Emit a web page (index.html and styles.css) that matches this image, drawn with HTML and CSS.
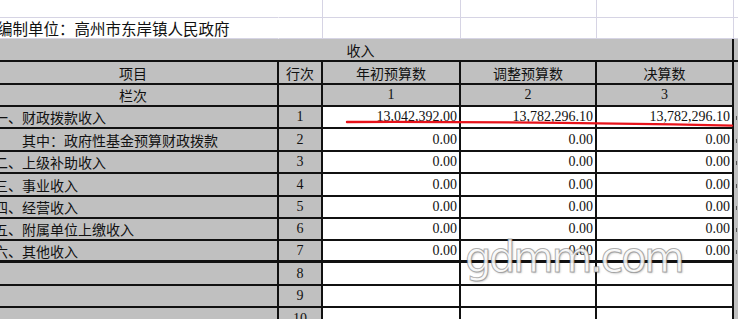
FILE: index.html
```html
<!DOCTYPE html>
<html lang="zh-CN">
<head>
<meta charset="utf-8">
<title>收入决算表</title>
<link rel="stylesheet" href="styles.css">
</head>
<body>
<div class="sheet">
  <div class="grid">
    <div class="c top"></div><div class="c top"></div><div class="c top"></div><div class="c top"></div><div class="c top"></div><div class="c top"></div>
    <div class="c top title">编制单位：高州市东岸镇人民政府</div><div class="c top"></div><div class="c top"></div><div class="c top"></div><div class="c top"></div><div class="c top"></div>

    <div class="c g ctr cjk span5">收入</div><div class="c edge hb"></div>

    <div class="c g ctr cjk">项目</div><div class="c g ctr cjk">行次</div><div class="c g ctr cjk">年初预算数</div><div class="c g ctr cjk">调整预算数</div><div class="c g ctr cjk">决算数</div><div class="c edge"></div>

    <div class="c g ctr cjk">栏次</div><div class="c g ctr"></div><div class="c g ctr ser">1</div><div class="c g ctr ser">2</div><div class="c g ctr ser">3</div><div class="c edge"></div>

    <div class="c g lbl cjk">一、财政拨款收入</div><div class="c g ctr ser">1</div><div class="c w num">13,042,392.00</div><div class="c w num">13,782,296.10</div><div class="c w num">13,782,296.10</div><div class="c edge mk"></div>

    <div class="c g lbl cjk">　　其中：政府性基金预算财政拨款</div><div class="c g ctr ser">2</div><div class="c w num">0.00</div><div class="c w num">0.00</div><div class="c w num">0.00</div><div class="c edge mk"></div>

    <div class="c g lbl cjk">二、上级补助收入</div><div class="c g ctr ser">3</div><div class="c w num">0.00</div><div class="c w num">0.00</div><div class="c w num">0.00</div><div class="c edge mk"></div>

    <div class="c g lbl cjk">三、事业收入</div><div class="c g ctr ser">4</div><div class="c w num">0.00</div><div class="c w num">0.00</div><div class="c w num">0.00</div><div class="c edge mk"></div>

    <div class="c g lbl cjk">四、经营收入</div><div class="c g ctr ser">5</div><div class="c w num">0.00</div><div class="c w num">0.00</div><div class="c w num">0.00</div><div class="c edge mk"></div>

    <div class="c g lbl cjk">五、附属单位上缴收入</div><div class="c g ctr ser">6</div><div class="c w num">0.00</div><div class="c w num">0.00</div><div class="c w num">0.00</div><div class="c edge mk"></div>

    <div class="c g lbl cjk thick">六、其他收入</div><div class="c g ctr ser thick">7</div><div class="c w num thick">0.00</div><div class="c w num thick">0.00</div><div class="c w num thick">0.00</div><div class="c edge mk"></div>

    <div class="c g lbl cjk"></div><div class="c g ctr ser">8</div><div class="c w num"></div><div class="c w num"></div><div class="c w num"></div><div class="c edge"></div>

    <div class="c g lbl cjk"></div><div class="c g ctr ser">9</div><div class="c w num"></div><div class="c w num"></div><div class="c w num"></div><div class="c edge"></div>

    <div class="c g lbl cjk"></div><div class="c g ctr ser">10</div><div class="c w num"></div><div class="c w num"></div><div class="c w num"></div><div class="c edge"></div>
  </div>

  <svg class="mark" width="738" height="319" viewBox="0 0 738 319" aria-hidden="true">
    <path d="M347 122 C 450 121.6 600 123 732 125.6" fill="none" stroke="#e8121a" stroke-width="2.4" stroke-linecap="round"/>
  </svg>

  <div class="watermark">gdmm.com</div>
</div>
</body>
</html>
```

FILE: styles.css
```css
* { box-sizing: border-box; }

html, body {
  margin: 0;
  padding: 0;
  background: #ffffff;
}

.sheet {
  position: relative;
  width: 738px;
  height: 319px;
  overflow: hidden;
  background: #ffffff;
}

.grid {
  display: grid;
  margin-left: -11px;
  grid-template-columns: 290px 44px 138px 136px 137px 40px;
  grid-template-rows: 18px 21px 23px 23px 22px 22px 23px 22px 23px 22px 22px 22px 23px 22px 23px;
  color: #111;
}

.c {
  display: flex;
  align-items: center;
  min-width: 0;
  overflow: hidden;
  white-space: nowrap;
  border-right: 2px solid #111;
  border-bottom: 2px solid #111;
}

.top {
  background: #ffffff;
  border-right: 1px solid #d6d4e4;
  border-bottom: 1px solid #d6d4e4;
}

.top:nth-child(1), .top:nth-child(7) {
  border-right-color: transparent;
}

.title {
  font-family: "Noto Sans CJK SC", "Noto Sans", sans-serif;
  font-size: 15.5px;
  padding-left: 8px;
  color: #111;
}

.g { background: #c0c0c0; }
.w { background: #ffffff; }

.span5 { grid-column: 1 / 6; }

.cjk {
  font-family: "Noto Sans CJK SC", "Noto Sans", sans-serif;
  font-size: 14px;
}

.ser {
  font-family: "Liberation Serif", "Times New Roman", serif;
  font-size: 14px;
}

.ctr { justify-content: center; }

.lbl {
  justify-content: flex-start;
  padding-left: 5px;
}

.num {
  justify-content: flex-end;
  padding-right: 2px;
  font-family: "Liberation Serif", "Times New Roman", serif;
  font-size: 14px;
}

.thick { border-bottom-width: 3px; }

.edge {
  background: #c0c0c0;
  border-right: none;
  border-bottom: none;
}

.edge.hb { border-bottom: 2px solid #111; }

.mk::before {
  content: "";
  display: block;
  width: 1px;
  height: 4px;
  margin-left: 2px;
  background: #555;
}

.mark {
  position: absolute;
  left: 0;
  top: 0;
  pointer-events: none;
}

.watermark {
  position: absolute;
  left: 465px;
  top: 237px;
  font-family: "DejaVu Sans", sans-serif;
  font-weight: 400;
  font-size: 42px;
  line-height: 42px;
  letter-spacing: -2.6px;
  color: rgba(255, 255, 255, 0.88);
  -webkit-text-stroke: 1px rgba(110, 110, 110, 0.55);
  text-shadow: 1px 1px 2px rgba(0, 0, 0, 0.25);
}
```
